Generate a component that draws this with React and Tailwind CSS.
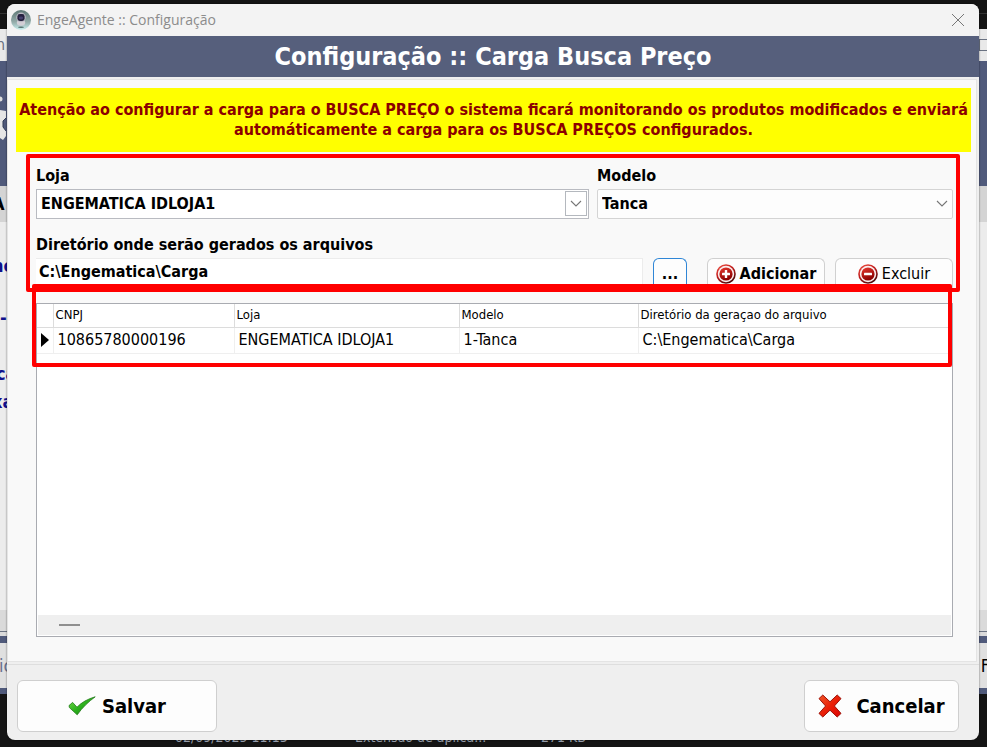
import { useState } from 'react';

const rows = [
  {
    cnpj: '10865780000196',
    loja: 'ENGEMATICA IDLOJA1',
    modelo: '1-Tanca',
    diretorio: 'C:\\Engematica\\Carga',
  },
];

const AgentLogo = () => (
  <svg viewBox="0 0 20 20" className="w-5 h-5 shrink-0" aria-hidden="true">
    <defs>
      <linearGradient id="agentBg" x1="0" y1="0" x2="0" y2="1">
        <stop offset="0" stopColor="#5d7775" />
        <stop offset="0.6" stopColor="#93aba9" />
        <stop offset="1" stopColor="#c9f0ef" />
      </linearGradient>
    </defs>
    <circle cx="10" cy="10" r="10" fill="url(#agentBg)" />
    <ellipse cx="10" cy="12.8" rx="4.2" ry="3" fill="#d2cfd6" />
    <ellipse cx="10" cy="7.4" rx="4.8" ry="4.8" fill="#b9b7c2" />
    <rect x="6.4" y="4" width="7.2" height="7" rx="2.4" fill="#25213f" />
    <ellipse cx="10" cy="8" rx="2.2" ry="1.4" fill="#45406e" />
    <ellipse cx="10" cy="17.2" rx="3" ry="0.7" fill="#56706f" />
  </svg>
);

const RoundIcon = ({ plus }) => (
  <svg viewBox="0 0 20 20" className="w-5 h-5 shrink-0" aria-hidden="true">
    <defs>
      <linearGradient id="ringRed" x1="0" y1="0" x2="0.6" y2="1">
        <stop offset="0" stopColor="#f4584a" />
        <stop offset="0.5" stopColor="#c01c1c" />
        <stop offset="1" stopColor="#4a0808" />
      </linearGradient>
      <linearGradient id="discRed" x1="0" y1="0" x2="0.4" y2="1">
        <stop offset="0" stopColor="#e83a30" />
        <stop offset="1" stopColor="#8c0000" />
      </linearGradient>
    </defs>
    <circle cx="10" cy="10" r="9.8" fill="url(#ringRed)" />
    <circle cx="10" cy="10" r="8.2" fill="#fbeeee" />
    <circle cx="10" cy="10" r="6.6" fill="url(#discRed)" />
    <rect x="6" y="8.8" width="8" height="2.4" rx="0.5" fill="#fff" />
    {plus && <rect x="8.8" y="6" width="2.4" height="8" rx="0.5" fill="#fff" />}
  </svg>
);

const CheckIcon = () => (
  <svg viewBox="0 0 28 20" className="w-7 h-5 shrink-0" aria-hidden="true">
    <defs>
      <linearGradient id="checkGreen" x1="0" y1="0" x2="1" y2="1">
        <stop offset="0" stopColor="#7be04e" />
        <stop offset="0.5" stopColor="#2bb01c" />
        <stop offset="1" stopColor="#1a7d12" />
      </linearGradient>
    </defs>
    <path
      d="M1 9.6L4.6 6.4L9 11.2C13.6 6.4 19.6 3 27.2 0.8C20.6 5.6 14.4 11.4 9.2 18.8L1.4 11.6Z"
      fill="url(#checkGreen)"
      stroke="#1f7a17"
      strokeWidth="0.8"
      strokeLinejoin="round"
    />
  </svg>
);

const CrossIcon = () => (
  <svg viewBox="0 0 24 24" className="w-6 h-6 shrink-0" aria-hidden="true">
    <defs>
      <linearGradient id="crossRed" x1="0" y1="0" x2="1" y2="1">
        <stop offset="0" stopColor="#f0582a" />
        <stop offset="0.5" stopColor="#ea2008" />
        <stop offset="1" stopColor="#dc0404" />
      </linearGradient>
    </defs>
    <path
      d="M1 4.6L4.8 1L12 7.8L19.2 1L23 4.6L16.4 12L23 19.4L19.2 23L12 16.2L4.8 23L1 19.4L7.6 12Z"
      fill="url(#crossRed)"
      stroke="#9c1208"
      strokeWidth="1"
      strokeLinejoin="round"
    />
  </svg>
);

// WINDOWS THAT STAY OPEN BEHIND THE DIALOG
const Backdrop = () => (
  <div
    className="absolute inset-0 -z-10 flex flex-col overflow-hidden bg-[#141414] text-[#10108c]"
    aria-hidden="true"
  >
    <div className="h-[14px] border-b border-[#333]" />
    <div className="h-[15px]" />
    <div className="flex h-8 items-center justify-between bg-[#e9e9e9] text-base text-gray-500">
      <span className="-ml-1">n</span>
      <span className="-mr-1 h-3 w-3 border border-gray-500" />
    </div>
    <div className="h-[125px] bg-[#505a7b]">
      <svg viewBox="0 0 8 125" className="h-[125px] w-2">
        <circle cx="0" cy="38" r="2.5" fill="#ddd" />
        <path d="M0 49L6 50L6 57L3 60L3 66L6 70L6 75L3 79L0 77Z" fill="#e6e6e6" />
        <path d="M6 57L3 60L3 66L6 70" fill="none" stroke="#303a55" />
      </svg>
    </div>
    <div className="flex h-9 items-center bg-[#d4d4d4] text-lg font-bold text-black">
      <span className="-ml-2">A</span>
    </div>
    <div className="flex h-[388px] flex-col bg-[#ececec] pt-8 text-lg font-bold leading-6">
      <span className="-ml-2">ne</span>
      <span className="mt-7">-.</span>
      <span className="-ml-1 mt-8">ca</span>
      <span className="-ml-2 mt-1">xa</span>
    </div>
    <div className="h-[22px] border-b border-gray-500 bg-[#dadada]" />
    <div className="h-1 bg-[#dadada]" />
    <div className="h-[7px] bg-[#505a7b]" />
    <div className="flex h-[45px] items-center justify-between bg-[#e0e0e0] text-lg text-[#68718e]">
      <span className="-ml-px">ic</span>
      <span className="-mr-3 text-black">Fe</span>
    </div>
    <div className="h-[6px] bg-[#505a7b]" />
    <div className="flex flex-1 items-end pb-[2px] pl-[175px] text-sm leading-4 text-gray-400">
      <span className="w-[180px]">02/09/2025 11:13</span>
      <span className="w-[186px]">Extensão de aplica...</span>
      <span>271 KB</span>
    </div>
  </div>
);

const SelectBox = ({ id, label, options, boxed, className }) => (
  <div className={className}>
    <label htmlFor={id} className="block leading-5">
      {label}
    </label>
    <div className="relative mt-[3px]">
      <select
        id={id}
        className={
          boxed
            ? 'h-[30px] w-full appearance-none border border-[#b9bbc1] bg-white px-1 font-bold text-black'
            : 'h-[30px] w-full appearance-none rounded-xs border border-[#d4d4d4] bg-[#fdfdfd] px-1 font-bold text-black'
        }
      >
        {options.map((option) => (
          <option key={option}>{option}</option>
        ))}
      </select>
      <span
        className={
          boxed
            ? 'pointer-events-none absolute top-[2px] right-[2px] flex h-[25px] w-[22px] items-center justify-center border border-[#b4b8be]'
            : 'pointer-events-none absolute top-[2px] right-0 flex h-[26px] w-[22px] items-center justify-center'
        }
      >
        <svg viewBox="0 0 12 8" className="h-2 w-3" aria-hidden="true">
          <path d="M1 1L6 6L11 1" fill="none" stroke="#777" strokeWidth="1.1" />
        </svg>
      </span>
    </div>
  </div>
);

const App = () => {
  const [diretorio, setDiretorio] = useState('C:\\Engematica\\Carga');

  return (
    <div className="relative isolate flex min-h-screen pt-1 pr-2 pb-[7px] pl-[7px] font-['DejaVu_Sans_Condensed','DejaVu_Sans',sans-serif]">
      <Backdrop />

      <div
        role="dialog"
        aria-labelledby="dialogTitle"
        className="flex flex-1 flex-col overflow-hidden rounded-lg bg-[#efefef] shadow-[0_0_2px_rgba(0,0,0,0.6)]"
      >
        <div className="flex h-8 items-center justify-between bg-[#f3f3f3] pr-[14px] pl-1">
          <div className="flex items-center gap-[6px] font-['Open_Sans',sans-serif] text-sm text-[#8c8c8c]">
            <AgentLogo />
            <span>EngeAgente :: Configuração</span>
          </div>
          <button type="button" aria-label="Fechar">
            <svg viewBox="0 0 14 14" className="h-[14px] w-[14px]" aria-hidden="true">
              <path d="M1 1L13 13M13 1L1 13" fill="none" stroke="#777" />
            </svg>
          </button>
        </div>

        <h1
          id="dialogTitle"
          className="bg-[#565f7c] pt-px text-center text-[25px] leading-10 font-bold text-white"
        >
          Configuração :: Carga Busca Preço
        </h1>

        <main className="mt-[2px] mr-[2px] mb-[2px] flex flex-1 flex-col border border-[#e4e4e4] bg-[#f9f9f9] pb-6">
          <p className="mr-[5px] ml-2 mt-2 bg-[#ffff00] py-3 text-center text-base leading-5 font-bold text-[#8b0000]">
            Atenção ao configurar a carga para o BUSCA PREÇO o sistema ficará monitorando os produtos
            modificados e enviará automáticamente a carga para os BUSCA PREÇOS configurados.
          </p>

          <form className="mr-4 ml-[18px] mt-[2px] rounded-xs border-4 border-[#ff0000] pt-2 pr-[3px] pl-[6px] text-base font-bold">
            <div className="flex gap-2">
              <SelectBox
                id="loja"
                label="Loja"
                options={['ENGEMATICA IDLOJA1']}
                boxed
                className="flex-[553]"
              />
              <SelectBox id="modelo" label="Modelo" options={['Tanca']} className="flex-[356]" />
            </div>

            <label htmlFor="diretorio" className="mt-4 block leading-5">
              Diretório onde serão gerados os arquivos
            </label>
            <div className="mt-[3px] flex h-[30px]">
              <input
                id="diretorio"
                type="text"
                value={diretorio}
                onChange={(e) => setDiretorio(e.target.value)}
                className="min-w-0 flex-1 border-t border-r border-[#ececec] bg-white px-[3px] pb-1 font-bold"
              />
              <button
                type="button"
                className="ml-[10px] w-[34px] rounded-t-md border border-b-0 border-[#2f86d6] bg-[#fdfdfd]"
              >
                ...
              </button>
              <button
                type="button"
                className="ml-5 flex w-[118px] items-center justify-center gap-1 rounded-t-md border border-b-0 border-[#d0d0d0] bg-[#fdfdfd]"
              >
                <RoundIcon plus />
                Adicionar
              </button>
              <button
                type="button"
                className="ml-[10px] flex w-[118px] items-center justify-center gap-1 rounded-t-md border border-b-0 border-[#d0d0d0] bg-[#fdfdfd] font-normal"
              >
                <RoundIcon />
                Excluir
              </button>
            </div>
          </form>

          <div className="relative mt-[11px] mr-[23px] ml-7 flex flex-1 flex-col border border-[#a9abb1] bg-white">
            {/* highlight around the first record */}
            <div className="pointer-events-none absolute -top-5 right-0 -left-[5px] h-[83px] rounded-xs border-4 border-[#ff0000]" />
            <table className="w-full table-fixed text-left">
              <colgroup>
                <col className="w-4" />
                <col className="w-[181px]" />
                <col className="w-[225px]" />
                <col className="w-[179px]" />
                <col />
              </colgroup>
              <thead>
                <tr className="h-[23px] border-b border-[#dcdcdc] text-[13px] leading-5">
                  <th aria-label="Registro atual" />
                  <th className="border-l border-[#dcdcdc] px-[2px] font-normal">CNPJ</th>
                  <th className="border-l border-[#dcdcdc] px-[2px] font-normal">Loja</th>
                  <th className="border-l border-[#dcdcdc] px-[2px] font-normal">Modelo</th>
                  <th className="border-l border-[#dcdcdc] px-[2px] font-normal">
                    Diretório da geraçao do arquivo
                  </th>
                </tr>
              </thead>
              <tbody>
                {rows.map((row) => (
                  <tr key={row.cnpj} className="h-[26px] border-b border-[#efefef] text-base">
                    <td>
                      <svg viewBox="0 0 8 14" className="ml-1 h-[14px] w-2" aria-hidden="true">
                        <path d="M0 0L8 7L0 14Z" fill="#000" />
                      </svg>
                    </td>
                    <td className="border-l border-[#efefef] px-1">{row.cnpj}</td>
                    <td className="border-l border-[#efefef] px-1">{row.loja}</td>
                    <td className="border-l border-[#efefef] px-1">{row.modelo}</td>
                    <td className="border-l border-[#efefef] px-1">{row.diretorio}</td>
                  </tr>
                ))}
              </tbody>
            </table>
            <div className="mx-px mt-auto mb-px flex h-5 items-center bg-[#efefef] pl-[21px]">
              <div className="h-[2px] w-[21px] bg-[#8f8f8f]" />
            </div>
          </div>
        </main>

        <footer className="flex justify-between border-t border-[#dedede] pt-[15px] pr-5 pb-2 pl-[10px] text-xl font-bold">
          <button
            type="button"
            className="flex h-[52px] w-[200px] items-center justify-center gap-[6px] rounded-md border border-[#cfcfcf] bg-[#fdfdfd]"
          >
            <CheckIcon />
            Salvar
          </button>
          <button
            type="button"
            className="flex h-[52px] w-[155px] items-center justify-center gap-[14px] rounded-md border border-[#cfcfcf] bg-[#fdfdfd]"
          >
            <CrossIcon />
            Cancelar
          </button>
        </footer>
      </div>
    </div>
  );
};

export default App;
